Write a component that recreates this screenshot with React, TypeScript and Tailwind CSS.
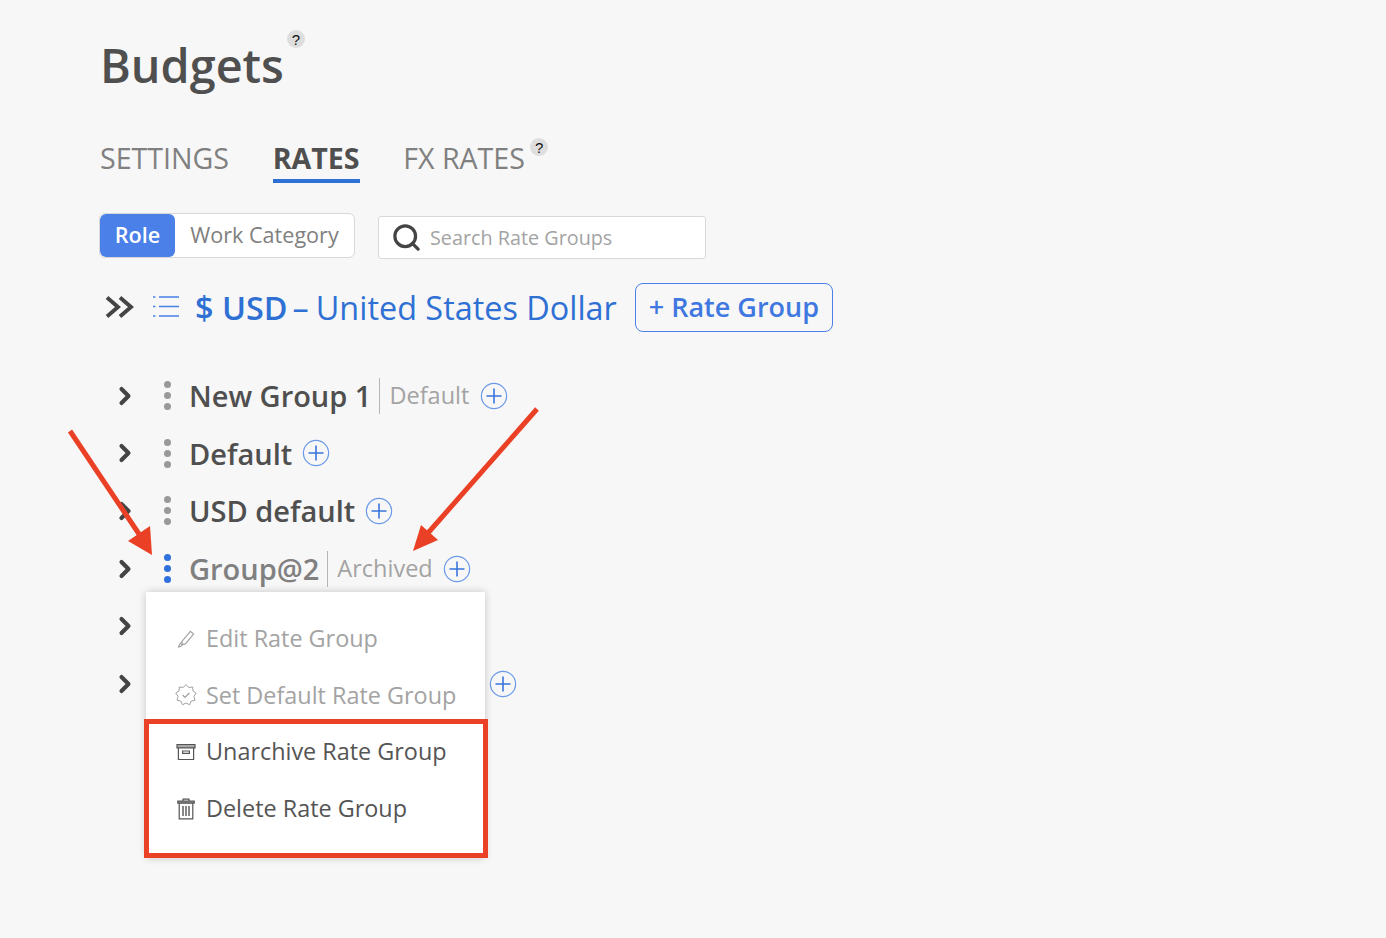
import { ChevronRight, Search } from 'lucide-react';

function Help() {
  return (
    <span className="flex h-[18px] w-[18px] items-center justify-center rounded-full bg-[#dedede] text-[15px] leading-none text-[#111] [font-family:'Liberation_Sans',sans-serif]">
      ?
    </span>
  );
}

function PlusCircle() {
  return (
    <svg width="28" height="28" viewBox="0 0 28 28" fill="none" className="shrink-0">
      <circle cx="14" cy="14" r="12.6" stroke="#6b9ae8" strokeWidth="1.2" />
      <path d="M14 6.5v15M6.5 14h15" stroke="#3a75dc" strokeWidth="1.6" />
    </svg>
  );
}

function Kebab({ active }: { active?: boolean }) {
  const color = active ? 'bg-[#2f70dc]' : 'bg-[#999999]';
  return (
    <div className="flex w-[8px] flex-col gap-[4px]">
      <span className={`h-[7px] w-[7px] rounded-full ${color}`} />
      <span className={`h-[7px] w-[7px] rounded-full ${color}`} />
      <span className={`h-[7px] w-[7px] rounded-full ${color}`} />
    </div>
  );
}

function Row({ children, active }: { children?: React.ReactNode; active?: boolean }) {
  return (
    <div className="flex h-[57.6px] items-center">
      <ChevronRight size={28} strokeWidth={3.5} className="ml-[11px] shrink-0 text-[#444444]" />
      <div className="ml-[25px]">
        <Kebab active={active} />
      </div>
      <div className="ml-[17px] flex items-center">{children}</div>
    </div>
  );
}

function Tag({ label }: { label: string }) {
  return (
    <>
      <span className="ml-[8px] h-[36px] w-px bg-[#b5b5b5]" />
      <span className="ml-[9px] text-[23.5px] font-normal text-[#a3a3a3]">{label}</span>
    </>
  );
}

function PencilIcon() {
  return (
    <svg width="20" height="20" viewBox="0 0 20 20" fill="none" stroke="#a0a0a0" strokeWidth="1.1">
      <path d="M6.2 12.2 14.4 2.4l3.2 2.7-8.2 9.8-3.6.9z" />
      <path d="M6 12.5 3.5 15.6l-.9 2.4 2.6-1 1.9-2.3" />
    </svg>
  );
}

// toothed outline, alternating outer and inner radius
const gearPoints = Array.from({ length: 18 }, (_, i) => {
  const r = i % 2 === 0 ? 10.4 : 8;
  const a = (i * Math.PI) / 9 - Math.PI / 2;
  return `${(11 + r * Math.cos(a)).toFixed(2)},${(11 + r * Math.sin(a)).toFixed(2)}`;
}).join(' ');

function GearCheckIcon() {
  return (
    <svg width="22" height="22" viewBox="0 0 22 22" fill="none" stroke="#a0a0a0" strokeWidth="1">
      <polygon points={gearPoints} />
      <path d="M7.6 11l2.4 2.4 4.4-4.4" strokeWidth="1.3" />
    </svg>
  );
}

function ArchiveIcon() {
  return (
    <svg width="20" height="18" viewBox="0 0 20 18" fill="none" stroke="#555555" strokeWidth="1.2">
      <path d="M1 1.5h18v3.4H1z" fill="#a8a8a8" />
      <path d="M2.4 5v11.5h15.2V5" />
      <path d="M6.6 8h6.8v2.4H6.6z" />
    </svg>
  );
}

function TrashIcon() {
  return (
    <svg width="18" height="22" viewBox="0 0 18 22" fill="none" stroke="#555555" strokeWidth="1.2">
      <path d="M6 3V1.2h6V3" />
      <path d="M.8 3h16.4v2.2H.8z" fill="#8a8a8a" />
      <path d="M2.2 5.2v15.6h13.6V5.2" />
      <path d="M6 8v10M9 8v10M12 8v10" strokeWidth="1.4" />
    </svg>
  );
}

function MenuItem({ icon, label, disabled }: { icon: React.ReactNode; label: string; disabled?: boolean }) {
  return (
    <div className={`flex h-[56.7px] items-center text-[23.4px] ${disabled ? 'text-[#a3a3a3]' : 'text-[#555555]'}`}>
      <span className="flex w-[60px] shrink-0 items-center justify-center pl-[20px]">{icon}</span>
      <span className="whitespace-nowrap">{label}</span>
    </div>
  );
}

export default function App() {
  return (
    <div className="relative h-[938px] w-[1386px] overflow-hidden bg-[#f7f7f7] pl-[100px] pt-[33px] [font-family:'Open_Sans',sans-serif]">
      {/* Title */}
      <div className="relative h-[66px]">
        <h1 className="text-[46.8px] font-semibold leading-[64px] text-[#4f4f4f]">Budgets</h1>
        <span className="absolute left-[187px] top-[-3px]">
          <Help />
        </span>
      </div>

      {/* Tabs */}
      <div className="mt-[39px] flex items-start gap-[43.6px] text-[28.6px] leading-[40px] text-[#808080]">
        <span>SETTINGS</span>
        <span className="border-b-[4px] border-[#2f70d4] pb-px font-bold text-[#4f4f4f]">RATES</span>
        <span className="relative">
          FX RATES
          <span className="absolute left-[127px] top-0">
            <Help />
          </span>
        </span>
      </div>

      {/* Toggle + search */}
      <div className="mt-[30px] -ml-px flex items-start">
        <div className="flex h-[45px] overflow-hidden rounded-[6px] border border-[#d8d8d8] bg-white text-[21.6px]">
          <span className="flex w-[75px] items-center justify-center rounded-[6px] bg-[#4a80e8] font-semibold text-white">Role</span>
          <span className="flex w-[179px] items-center justify-center text-[#808080]">Work Category</span>
        </div>
        <div className="ml-[23px] mt-[3px] flex h-[43px] w-[328px] items-center rounded-[3px] border border-[#d8d8d8] bg-white">
          <Search size={31} strokeWidth={2.5} className="ml-[12px] text-[#444444]" />
          <span className="ml-[8px] text-[19.8px] text-[#a3a3a3]">Search Rate Groups</span>
        </div>
      </div>

      {/* Currency heading */}
      <div className="mt-[23px] flex h-[50px] items-center">
        <svg width="30" height="24" viewBox="0 0 30 24" fill="none" stroke="#444444" strokeWidth="3.9" className="ml-[4px]">
          <path d="M3 2.5 14 12 3 21.5M16 2.5 27 12l-11 9.500" />
        </svg>
        <svg width="28" height="24" viewBox="0 0 28 24" fill="none" stroke="#4a80e8" strokeWidth="1.6" className="ml-[18px] -mt-[2px]">
          <path d="M7 3h20M7 12.500h20M7 22h20" />
          <path d="M1 3h2.400M1 12.500h2.400M1 22h2.400" />
        </svg>
        <span className="ml-[15px] flex whitespace-nowrap text-[32.4px] text-[#2f70d4]">
          <span className="font-semibold">$ USD</span>
          <span className="ml-[5px]">–</span>
          <span className="ml-[7px]">United States Dollar</span>
        </span>
        <button className="ml-[18px] h-[49px] w-[198px] rounded-[8px] border border-[#4a80e8] text-[27px] font-semibold text-[#3f78e0]">
          + Rate Group
        </button>
      </div>

      {/* Rate groups */}
      <div className="mt-[35px] text-[29px] font-semibold text-[#4f4f4f]">
        <Row>
          <span>New Group 1</span>
          <Tag label="Default" />
          <span className="ml-[11px]"><PlusCircle /></span>
        </Row>
        <Row>
          <span>Default</span>
          <span className="ml-[10px]"><PlusCircle /></span>
        </Row>
        <Row>
          <span>USD default</span>
          <span className="ml-[10px]"><PlusCircle /></span>
        </Row>
        <Row active>
          <span className="text-[#808080]">Group@2</span>
          <Tag label="Archived" />
          <span className="ml-[10px]"><PlusCircle /></span>
        </Row>
        <Row />
        <Row>
          <span className="ml-[300px]"><PlusCircle /></span>
        </Row>
      </div>

      {/* Row action menu */}
      <div className="absolute left-[146px] top-[592px] h-[266px] w-[339px] bg-white pt-[18.25px] shadow-[0_0_8px_rgba(0,0,0,0.2)]">
        <MenuItem disabled icon={<PencilIcon />} label="Edit Rate Group" />
        <MenuItem disabled icon={<GearCheckIcon />} label="Set Default Rate Group" />
        <MenuItem icon={<ArchiveIcon />} label="Unarchive Rate Group" />
        <MenuItem icon={<TrashIcon />} label="Delete Rate Group" />
      </div>

      {/* Annotations */}
      <div className="absolute left-[144px] top-[719px] h-[139px] w-[344px] border-[5px] border-[#ea4025]" />
      <svg width="1386" height="938" viewBox="0 0 1386 938" fill="none" className="pointer-events-none absolute left-0 top-0">
        <path d="M70 431 139 534" stroke="#ea4025" strokeWidth="5" />
        <path d="M152 555 128 541 150 526z" fill="#ea4025" />
        <path d="M537 409 428 533" stroke="#ea4025" strokeWidth="5" />
        <path d="M413 551 438 540 421 525z" fill="#ea4025" />
      </svg>
    </div>
  );
}
